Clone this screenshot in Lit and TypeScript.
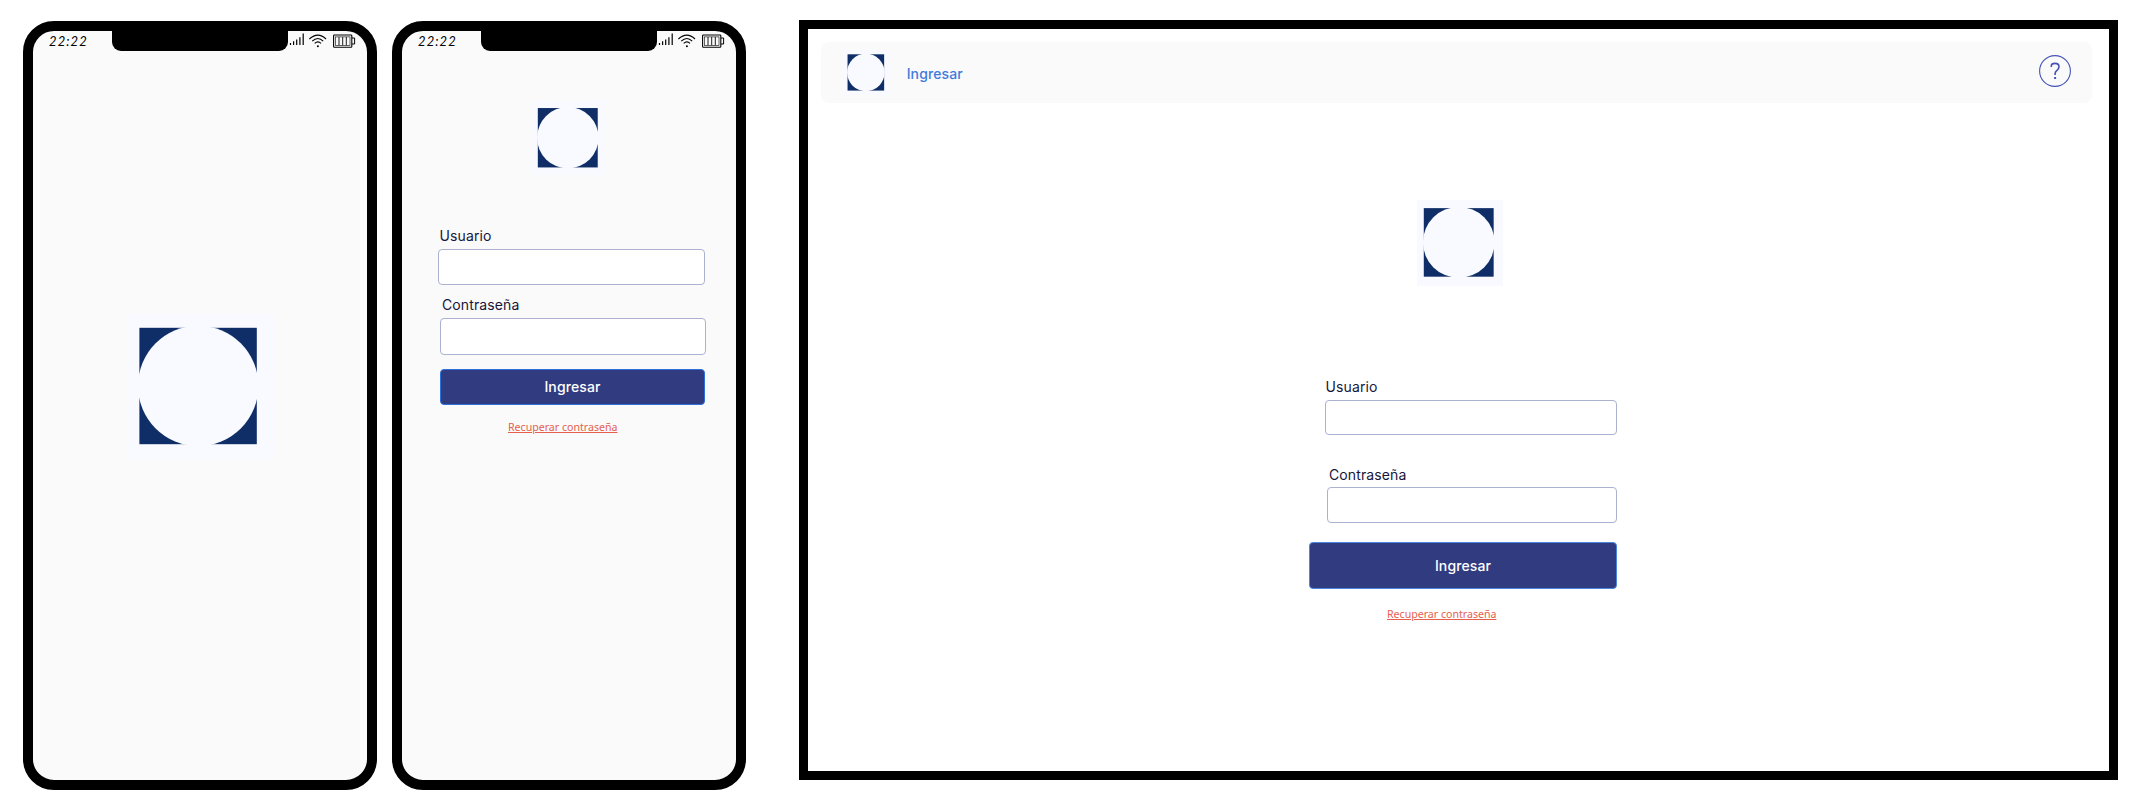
import { LitElement, html, css, svg } from "lit";
import { customElement, property } from "lit/decorators.js";

@customElement("brand-logo")
class BrandLogo extends LitElement {
  static styles = css`
    :host { display: block; }
    .mark { display: block; width: 100%; height: 100%; }
  `;
  render() {
    return html`<svg class="mark" viewBox="0 0 145 146" preserveAspectRatio="none">
      <rect width="145" height="146" fill="#f8faff"/>
      <rect x="11.4" y="13.8" width="117.4" height="116.4" fill="#0f2d66"/>
      <circle cx="70.2" cy="71.9" r="60.2" fill="#f8faff"/>
    </svg>`;
  }
}

@customElement("phone-frame")
class PhoneFrame extends LitElement {
  static styles = css`
    :host { display: block; }
    .phone { box-sizing: border-box; width: 354px; height: 769px; border: 10px solid #000; border-radius: 31px; background: #fafafa; display: flex; flex-direction: column; }
    .status { height: 18px; flex: none; display: grid; grid-template-columns: 79px 176px 1fr; }
    .time { padding-left: 16px; font: italic 400 13px/20px Lato, sans-serif; letter-spacing: 1.1px; color: #000; white-space: nowrap; }
    .notch { background: #000; border-radius: 0 0 9px 9px; }
    .icons { display: block; width: 79px; height: 18px; }
    .screen { flex: 1; }
  `;
  render() {
    return html`<div class="phone">
      <div class="status">
        <div class="time">22:22</div>
        <div class="notch"></div>
        <svg class="icons" viewBox="0 0 79 18" fill="none" stroke="#000">
          ${[[2.5, 12], [5.6, 10.3], [8.7, 8.6], [11.9, 6.3], [15.2, 2.5]].map(([x, y]) => svg`<path d="M${x} ${y}V14" stroke-width="1.2"/>`)}
          <path d="M21.4 8Q30 .1 38 8M24.2 10.2Q30 4.8 35.2 10.2M26.7 12.4Q30 9.4 33 12.4" stroke-width="1.1"/>
          <circle cx="29.9" cy="15.3" r="1" fill="#000" stroke="none"/>
          <rect x="45.6" y="4" width="18.2" height="12.2" rx=".8" stroke-width="1.1"/>
          <path d="M64 7h2.6v6H64" stroke-width="1"/>
          <rect x="47.4" y="5.9" width="14.6" height="8.4" stroke-width=".6"/>
          <path d="M51 6v8.2M54.7 6v8.2M58.3 6v8.2" stroke-width=".9"/>
        </svg>
      </div>
      <div class="screen"><slot></slot></div>
    </div>`;
  }
}

@customElement("login-form")
class LoginForm extends LitElement {
  @property({ type: Boolean, reflect: true }) wide = false;
  static styles = css`
    :host { display: block; font-family: Inter, sans-serif; }
    .form { display: flex; flex-direction: column; width: 268px; }
    .label { font-size: 14px; line-height: 20px; letter-spacing: .12px; color: #16163a; padding-left: 1.5px; }
    .second { padding-left: 4px; }
    .input { box-sizing: border-box; display: block; width: 267px; height: 36px; padding: 0 10px; border: 1px solid #abb2cf; border-radius: 4px; background: #fff; margin: 3px 0 10px; outline: none; }
    .shift { margin: 3px 0 14px 2px; width: 266px; height: 37px; }
    .button { box-sizing: border-box; margin-left: 2px; width: 265px; height: 36px; padding: 0; border: 1px solid #2e6fd9; border-radius: 4px; background: #313b80; color: #fff; font: 500 14px/20px Inter, sans-serif; letter-spacing: .12px; }
    .link { margin: 13px 0 0 70px; width: max-content; font: 400 10.6px/18px "Noto Sans", sans-serif; color: #e4604e; text-decoration: underline; white-space: nowrap; }
    :host([wide]) .form { width: 308px; }
    :host([wide]) .label { padding-left: 16.5px; }
    :host([wide]) .second { padding-left: 20px; }
    :host([wide]) .input { margin: 3px 0 30px 16px; width: 292px; height: 35px; }
    :host([wide]) .shift { margin: 2px 0 19px 17.5px; width: 290px; height: 36px; }
    :host([wide]) .button { margin-left: 0; width: 308px; height: 47px; border-color: #4a86dc; }
    :host([wide]) .link { margin: 15.5px 0 0 78px; }
  `;
  render() {
    return html`<div class="form">
      <label class="label" for="user">Usuario</label>
      <input class="input" id="user" />
      <label class="label second" for="pass">Contraseña</label>
      <input class="input shift" id="pass" type="password" />
      <button class="button">Ingresar</button>
      <a class="link">Recuperar contraseña</a>
    </div>`;
  }
}

@customElement("app-root")
class AppRoot extends LitElement {
  static styles = css`
    :host { display: block; width: 2144px; height: 802px; background: #fff; overflow: hidden; }
    .board { display: flex; align-items: flex-start; padding: 20px 0 0 23px; }
    .phone { margin: 1px 15px 0 0; }
    .splash { width: 145px; height: 146px; margin: 265.2px 0 0 94.8px; }
    .login-logo { width: 74px; height: 74.5px; margin: 51.5px 0 0 130.2px; }
    .login-form { margin: 51px 0 0 36px; }
    .desktop { box-sizing: border-box; width: 1319px; height: 760px; margin-left: 38px; border: 9px solid #000; background: #fff; padding: 13px 17px 0 13px; }
    .bar { box-sizing: border-box; height: 61px; border-radius: 8px; background: #fafafb; display: flex; align-items: flex-start; padding: 0 21px 0 22.5px; }
    .bar-logo { width: 45.2px; height: 45.5px; margin-top: 7.8px; }
    .nav { margin: 22px auto 0 18px; font: 500 14px/20px Inter, sans-serif; letter-spacing: .12px; color: #3f7bdd; }
    .help { display: block; width: 32px; height: 32px; margin-top: 13px; }
    .main-logo { width: 86.3px; height: 86px; margin: 97px 0 0 595.7px; }
    .main-form { margin: 91px 0 0 488px; }
  `;
  render() {
    return html`<div class="board">
      <phone-frame class="phone"><brand-logo class="splash"></brand-logo></phone-frame>
      <phone-frame class="phone">
        <brand-logo class="login-logo"></brand-logo>
        <login-form class="login-form"></login-form>
      </phone-frame>
      <div class="desktop">
        <div class="bar">
          <brand-logo class="bar-logo"></brand-logo>
          <span class="nav">Ingresar</span>
          <svg class="help" viewBox="0 0 32 32" fill="none" stroke="#4453b5">
            <circle cx="16" cy="16" r="15.4" stroke-width="1.1"/>
            <path d="M12.3 12V11Q12.3 8.4 16.1 8.4Q20 8.4 20 11.7Q20 13.6 18 15.3Q16.1 16.8 16.1 18.5V20" stroke-width="1.6"/>
            <path d="M16.1 22v2" stroke-width="2"/>
          </svg>
        </div>
        <brand-logo class="main-logo"></brand-logo>
        <login-form class="main-form" wide></login-form>
      </div>
    </div>`;
  }
}
